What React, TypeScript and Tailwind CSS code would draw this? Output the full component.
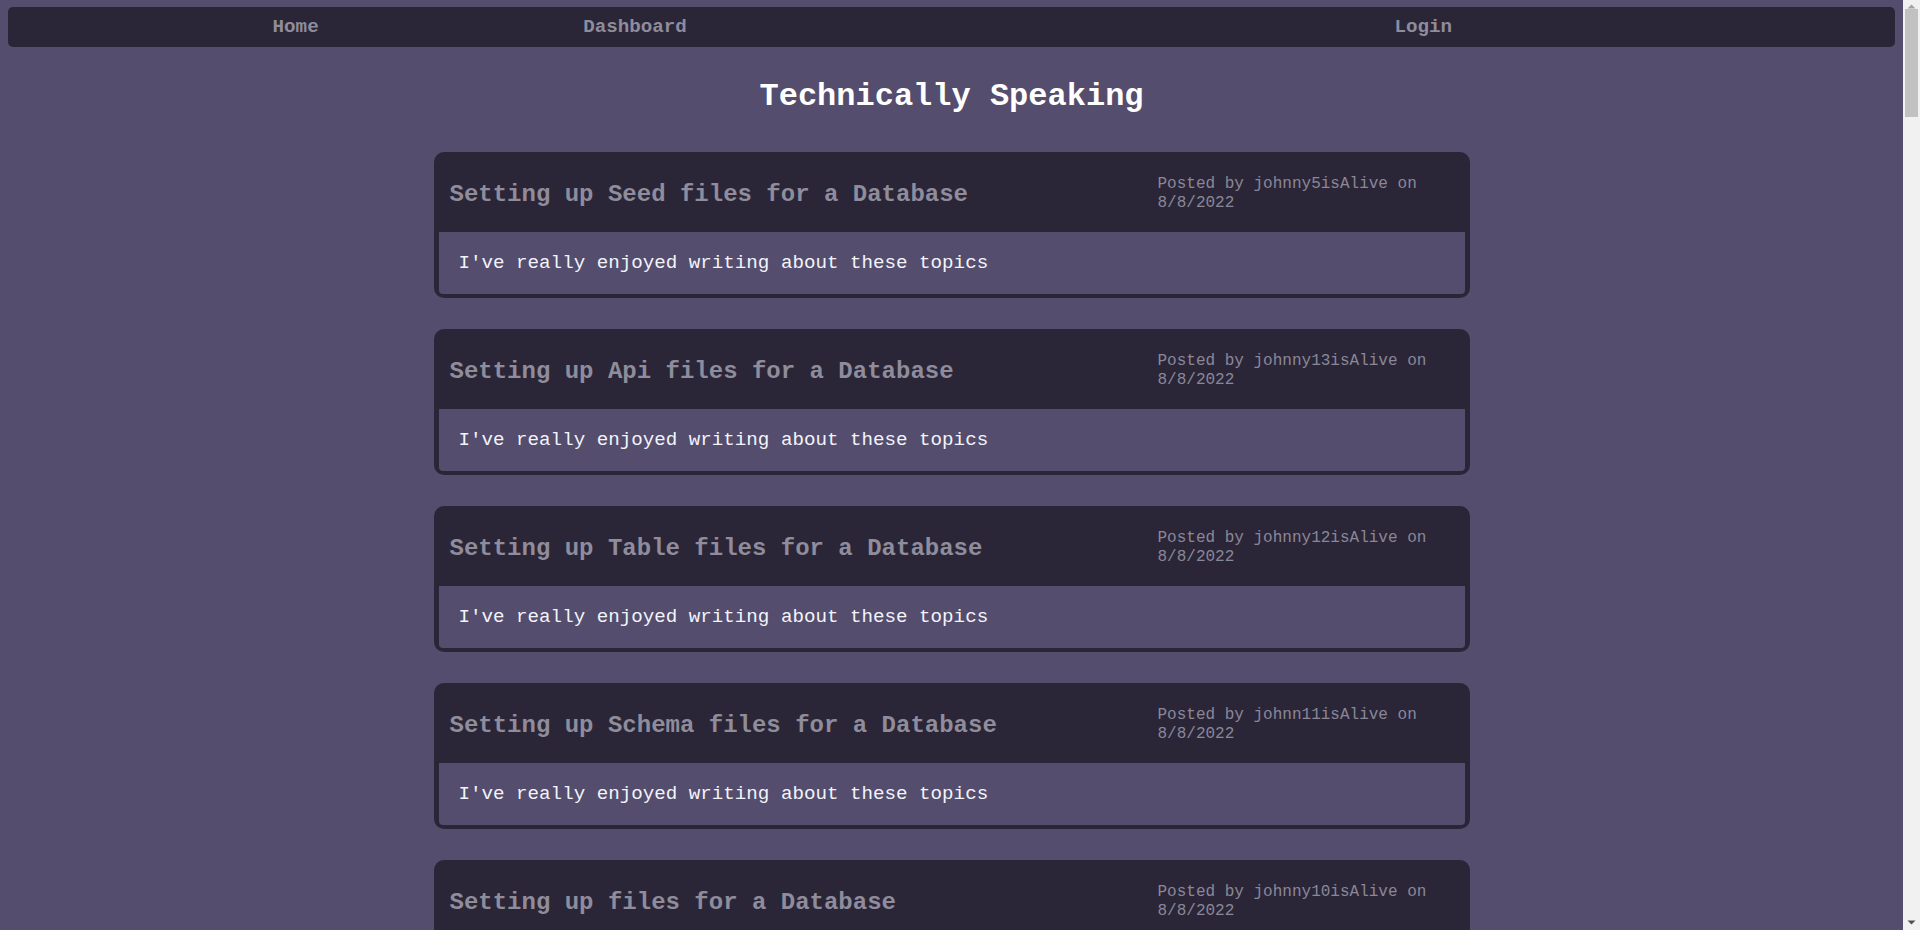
const posts = [
  { id: 1, title: "Setting up Seed files for a Database", author: "johnny5isAlive" },
  { id: 2, title: "Setting up Api files for a Database", author: "johnny13isAlive" },
  { id: 3, title: "Setting up Table files for a Database", author: "johnny12isAlive" },
  { id: 4, title: "Setting up Schema files for a Database", author: "johnn11isAlive" },
  { id: 5, title: "Setting up files for a Database", author: "johnny10isAlive" },
];

function NavBar() {
  return (
    <nav className="flex h-10 items-center rounded-[5px] bg-[#2a2638] text-[19.2px] font-bold text-[#8f8c9b]">
      <div className="flex flex-1 items-center justify-evenly">
        <a href="#">Home</a>
        <a href="#">Dashboard</a>
      </div>
      <div className="flex flex-1 items-center justify-evenly">
        <a href="#">Login</a>
      </div>
    </nav>
  );
}

function PostCard({ post }: { post: (typeof posts)[number] }) {
  return (
    <div className="mx-auto mb-[31px] w-[1036px] rounded-[10px] bg-[#2a2638] px-[5px] pb-[4px]">
      <div className="flex h-[80px] items-center justify-between pl-[11px]">
        <h2 className="pt-[5px] text-2xl font-bold text-[#8f8c9b]">{post.title}</h2>
        <p className="mr-[17px] w-[290px] pt-[4px] text-base leading-[19px] text-[#8a8799]">
          Posted by {post.author} on 8/8/2022
        </p>
      </div>
      <div className="flex h-[62px] items-center rounded-b-[4px] bg-[#544d6e] pl-5 text-[19.2px] text-[#f2f4fa]">
        I've really enjoyed writing about these topics
      </div>
    </div>
  );
}

// the browser scrollbar in the screenshot
function Scrollbar() {
  return (
    <div className="flex h-screen w-[17px] flex-col items-center bg-[#f1f1f1]">
      <svg width="9" height="9" viewBox="0 0 9 9" className="mt-[2px]">
        <path d="M0.5 6.5 L4.5 2.5 L8.5 6.5 Z" fill="#a3a3a3" />
      </svg>
      <div className="mt-[-2px] h-[108px] w-[13px] bg-[#c1c1c1]" />
      <div className="flex-1" />
      <svg width="9" height="9" viewBox="0 0 9 9" className="mb-[3px]">
        <path d="M0.5 2.5 L4.5 6.5 L8.5 2.5 Z" fill="#505050" />
      </svg>
    </div>
  );
}

export default function App() {
  return (
    <div className="flex h-screen overflow-hidden bg-[#544d6e] font-['Liberation_Mono','Courier_New',monospace]">
      <div className="flex-1 overflow-hidden px-2 pt-[7px]">
        <NavBar />
        <h1 className="mt-[31px] mb-[37px] text-center text-[32px] leading-[37px] font-bold text-white">
          Technically Speaking
        </h1>
        {posts.map((p) => (
          <PostCard key={p.id} post={p} />
        ))}
      </div>
      <Scrollbar />
    </div>
  );
}
